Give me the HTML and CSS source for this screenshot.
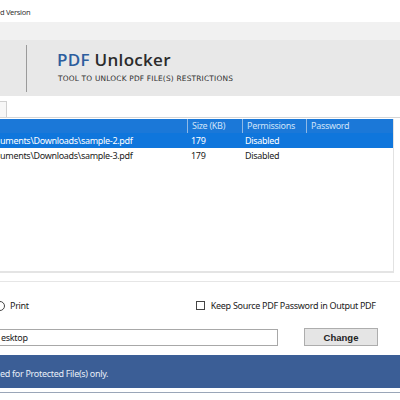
FILE: index.html
```html
<!DOCTYPE html>
<html lang="en">
<head>
  <meta charset="UTF-8">
  <title>PDF Unlocker</title>
  <link rel="stylesheet" href="styles.css">
</head>
<body>
  <div class="window">
    <div class="titlebar">d Version</div>
    <div class="strip"></div>
    <div class="brand">
      <div class="brand-sep"></div>
      <div class="brand-text">
        <h1><span class="pdf">PDF</span> Unlocker</h1>
        <p>TOOL TO UNLOCK PDF FILE(S) RESTRICTIONS</p>
      </div>
    </div>
    <div class="tabs"><span class="tab"></span></div>

    <div class="grid">
      <div class="row head">
        <div class="c-path"></div>
        <div class="c-size">Size (KB)</div>
        <div class="c-perm">Permissions</div>
        <div class="c-pass">Password</div>
      </div>
      <div class="row selected">
        <div class="c-path">uments\Downloads\sample-2.pdf</div>
        <div class="c-size">179</div>
        <div class="c-perm">Disabled</div>
        <div class="c-pass"></div>
      </div>
      <div class="row">
        <div class="c-path">uments\Downloads\sample-3.pdf</div>
        <div class="c-size">179</div>
        <div class="c-perm">Disabled</div>
        <div class="c-pass"></div>
      </div>
    </div>
    <div class="divider"></div>

    <div class="options">
      <label class="opt"><span class="radio"></span>Print</label>
      <label class="opt keep"><span class="check"></span>Keep Source PDF Password in Output PDF</label>
    </div>

    <div class="dest">
      <div class="path-box">esktop</div>
      <button class="change-btn">Change</button>
    </div>

    <div class="status">ed for Protected File(s) only.</div>
    <div class="footer"></div>
  </div>
</body>
</html>
```

FILE: styles.css
```css
body {
  margin: 0;
  padding: 0;
  background-color: #ffffff;
  font-family: "Noto Sans", "Open Sans", sans-serif;
  color: #222;
  letter-spacing: -0.3px;
}
.window {
  width: 400px;
  height: 400px;
  overflow: hidden;
}
.titlebar {
  height: 22px;
  font-size: 7.5px;
  line-height: 24px;
  color: #333;
}
.strip {
  height: 18px;
  background-color: #f1f1f1;
}
.brand {
  height: 56px;
  background-color: #e8e8e8;
  display: flex;
}
.brand-sep {
  width: 1px;
  margin: 5px 0 4px 26px;
  background-color: #9a9a9a;
}
.brand-text {
  margin-left: 30px;
  padding-top: 9px;
}
.brand-text h1 {
  margin: 0;
  font-family: "Open Sans", sans-serif;
  font-weight: 600;
  font-size: 17px;
  line-height: 22px;
  color: #2b2b2b;
  letter-spacing: 0.3px;
}
.brand-text .pdf {
  color: #2d5e9e;
}
.brand-text p {
  margin: 3px 0 0 1px;
  font-family: "DejaVu Sans", sans-serif;
  font-size: 7.4px;
  letter-spacing: 0.2px;
  color: #2e2e2e;
}
.tabs {
  height: 21px;
  border-bottom: 1px solid #d6d6d6;
  display: flex;
  align-items: flex-end;
}
.tab {
  width: 6px;
  height: 15px;
  border: 1px solid #d0d0d0;
  border-bottom: none;
  border-left: none;
  background: #f7f7f7;
}
.grid {
  height: 152px;
  margin: 1px 6px 0 0;
  border-right: 1px solid #e2e2e2;
  border-bottom: 2px solid #e4e4e4;
  font-size: 9px;
}
.row {
  display: flex;
  height: 14px;
  line-height: 15px;
  color: #1b1b1b;
}
.row.head {
  height: 14px;
  line-height: 14px;
  background-color: #1b78d8;
  color: #cfe3f8;
}
.row.selected {
  height: 15px;
  background-color: #0f76dc;
  color: #ffffff;
}
.row > div {
  padding-left: 4px;
  white-space: nowrap;
  overflow: hidden;
}
.c-path { width: 187px; padding-left: 0 !important; }
.c-size { width: 50px; }
.c-perm { width: 59px; }
.c-pass { flex: 1; }
.row.head > div + div {
  border-left: 1px solid #8fb9e6;
}
.divider {
  height: 5px;
  margin-top: 3px;
  border-bottom: 1px solid #e6e6e6;
}
.options {
  display: flex;
  margin-top: 17px;
  font-size: 9px;
  color: #222;
}
.opt {
  display: flex;
  align-items: center;
  gap: 5px;
}
.radio {
  width: 8px;
  height: 8px;
  border: 1px solid #444;
  border-radius: 50%;
  margin-left: -5px;
}
.keep {
  margin-left: 167px;
}
.check {
  width: 7px;
  height: 7px;
  border: 1px solid #444;
  margin-right: 1px;
}
.dest {
  display: flex;
  align-items: center;
  margin-top: 16px;
}
.path-box {
  width: 276px;
  height: 15px;
  border: 1px solid #a8a8a8;
  border-left: none;
  font-size: 9px;
  line-height: 15px;
  color: #222;
  padding-left: 1px;
}
.change-btn {
  margin-left: 26px;
  width: 74px;
  height: 18px;
  padding: 0;
  border: 1px solid #adadad;
  background-color: #e5e5e5;
  font-family: "Liberation Sans", Arial, sans-serif;
  font-weight: bold;
  font-size: 9.5px;
  letter-spacing: 0;
  color: #222;
}
.status {
  margin-top: 9px;
  height: 33px;
  background-color: #3b5e96;
  color: #e8eef8;
  font-size: 9px;
  line-height: 38px;
}
.footer {
  height: 4px;
  border-bottom: 1px solid #9aa6b8;
}
```
